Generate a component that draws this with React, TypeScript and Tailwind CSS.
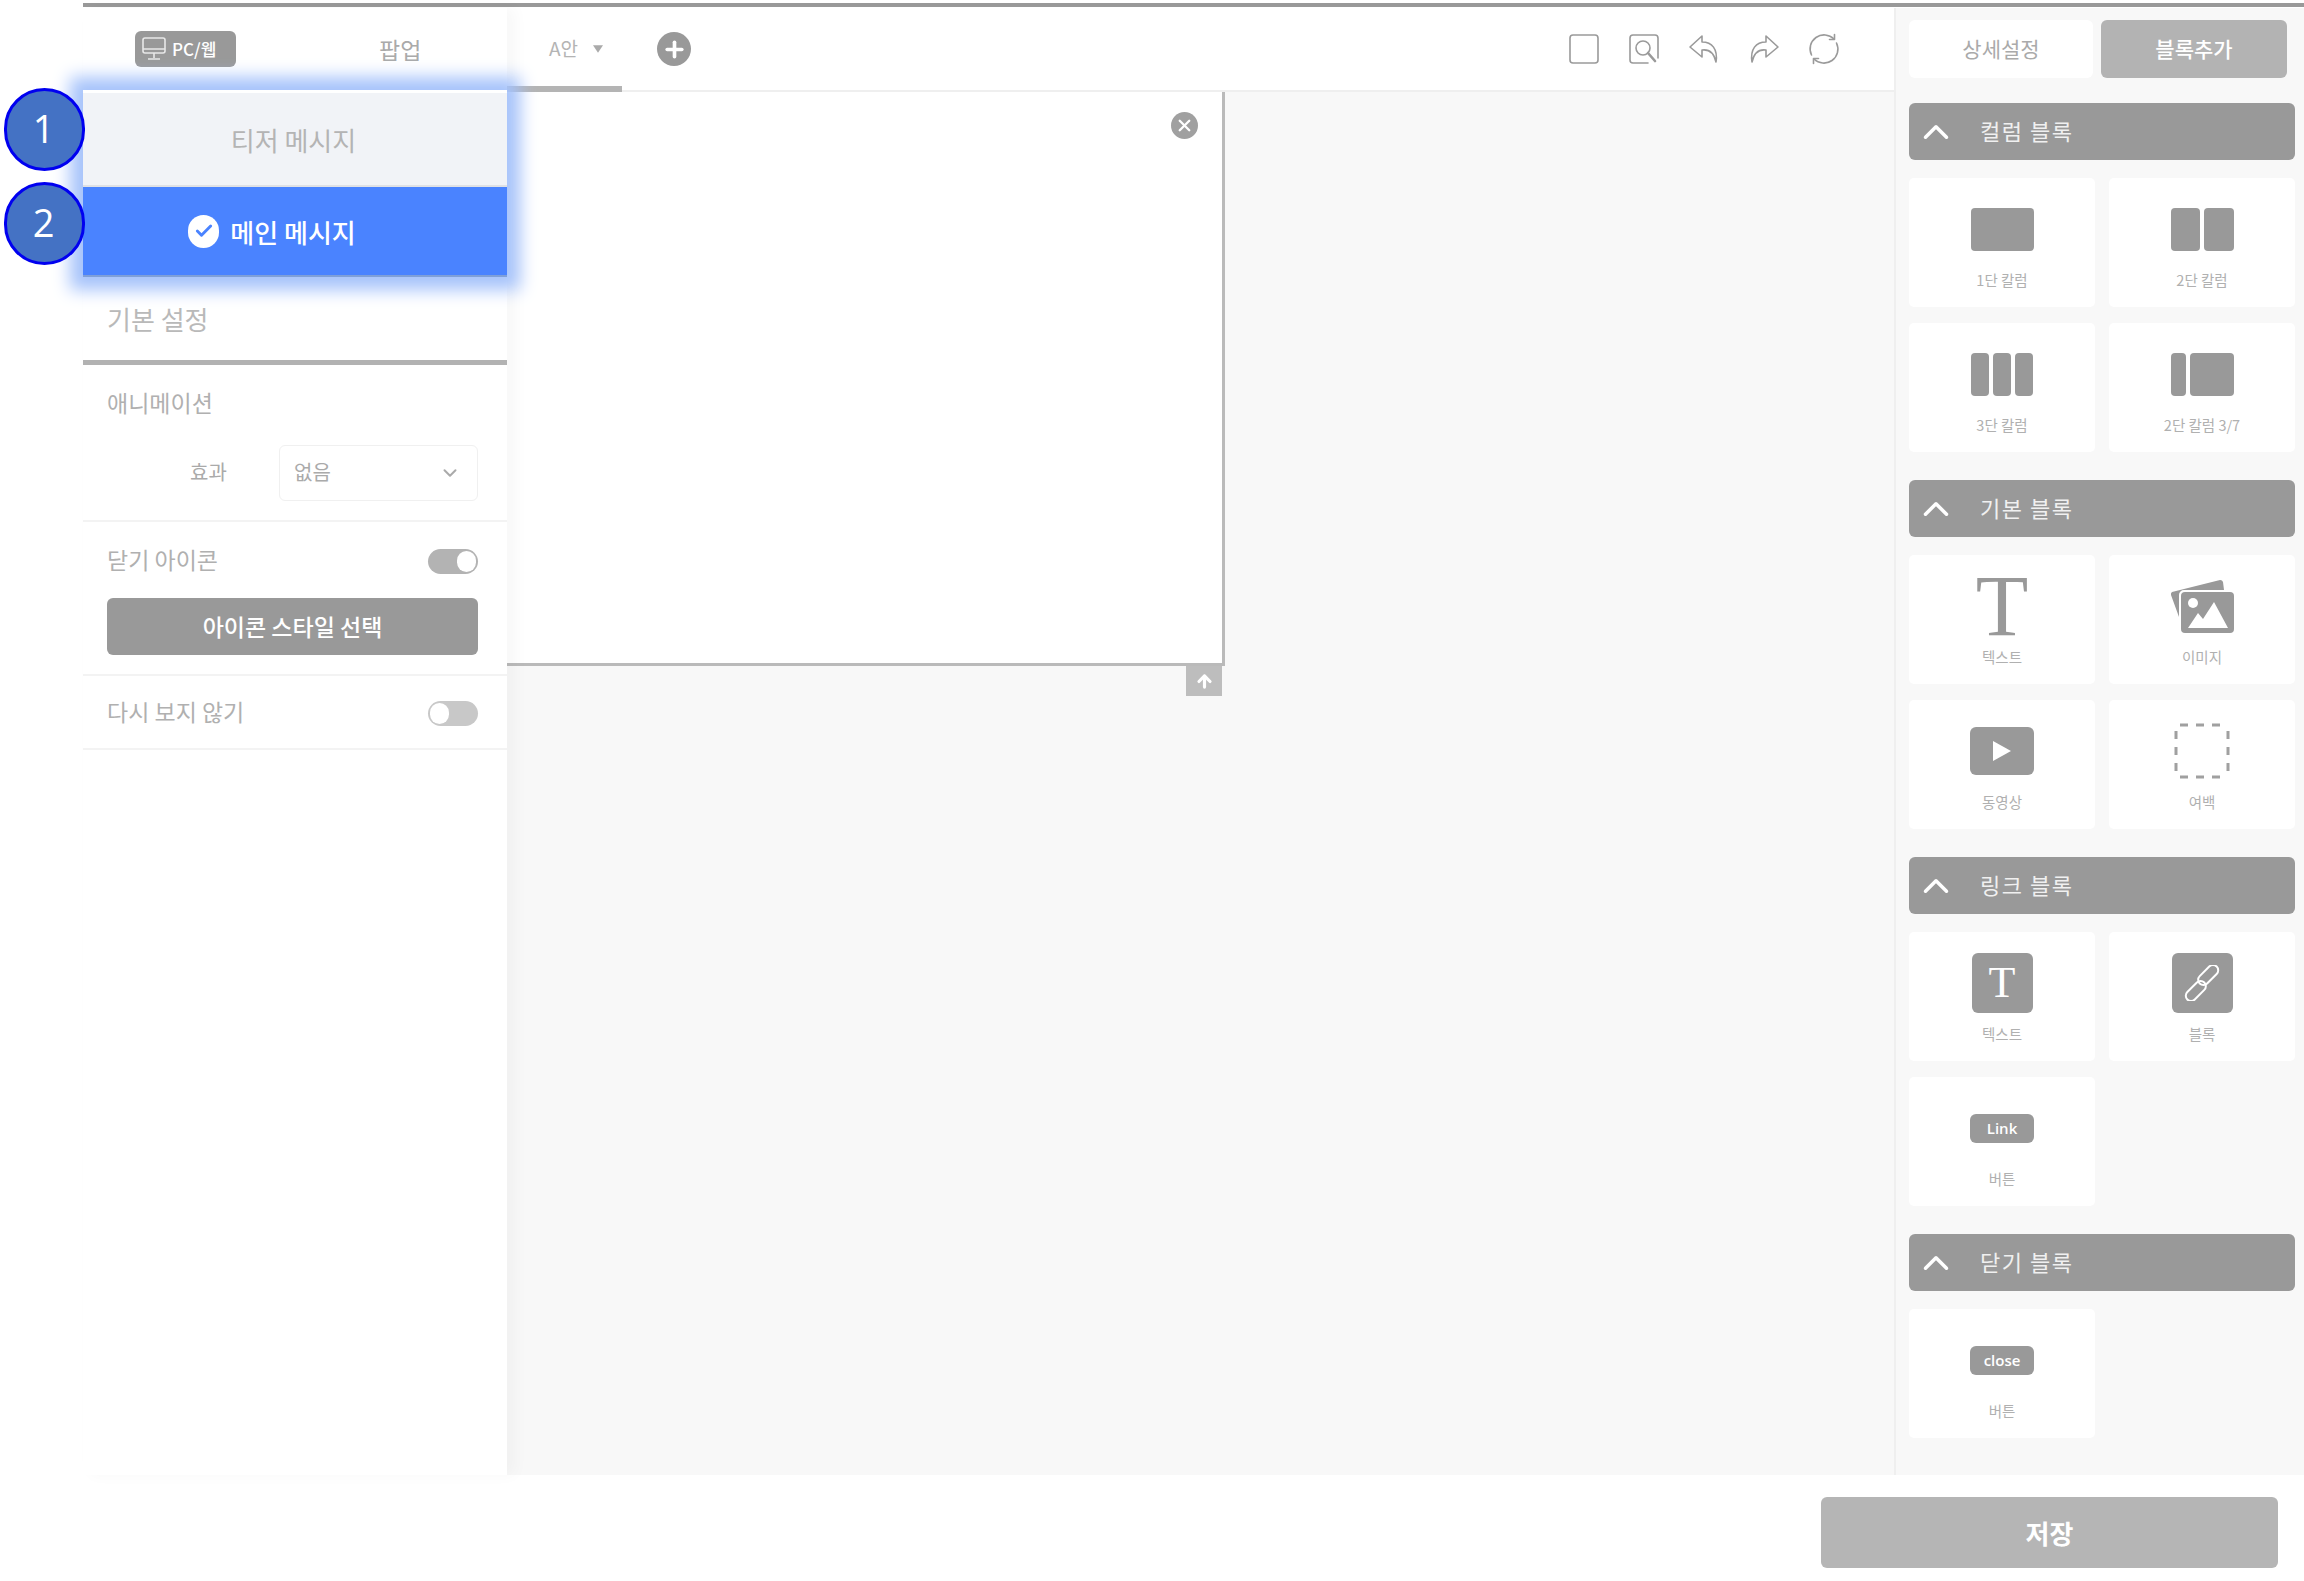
import React from "react";
import { ChevronDown, ChevronUp, Check, Plus, X, ArrowUp } from "lucide-react";

const FONT = "font-['Noto_Sans_CJK_KR','Noto_Sans',sans-serif]";

function Toggle({ on, cls = "" }: { on: boolean; cls?: string }) {
  return (
    <div className={`flex h-[25px] w-[50px] items-center rounded-full px-[2px] ${on ? "justify-end bg-[#b3b3b3]" : "justify-start bg-[#c8c8c8]"} ${cls}`}>
      <div className="h-[21px] w-[19px] rounded-full bg-white" />
    </div>
  );
}

function Divider() {
  return <div className="h-[2px] bg-[#f3f3f3]" />;
}

function Highlight() {
  return (
    <div className="relative z-10 shadow-[0_0_16px_13px_#a6c3fb]">
      <div className="flex h-[97px] items-center justify-center border-t-[3px] border-b-2 border-t-white border-b-[#dfe1e5] bg-[#f1f3f7] pr-[3px] text-[26px] text-[#b4b4b4]">
        티저 메시지
      </div>
      <div className="flex h-[90px] items-center justify-center gap-[11px] border-b-2 border-b-[#7f9fd8] bg-[#4a83ff] pr-[46px] text-[26px] font-medium text-white">
        <span className="flex h-[33px] w-[31px] items-center justify-center rounded-full bg-white">
          <Check size={20} strokeWidth={3.5} className="text-[#4a83ff]" />
        </span>
        메인 메시지
      </div>
      <Badge n="1" cls="top-[-2px]" />
      <Badge n="2" cls="top-[92px]" />
    </div>
  );
}

function Badge({ n, cls }: { n: string; cls: string }) {
  return (
    <div className={`absolute left-[-79px] flex h-[83px] w-[81px] items-center justify-center rounded-full border-[3px] border-[#0000f0] bg-[#4472c4] pb-[2px] pr-[2px] font-['Open_Sans',sans-serif] text-[38px] text-white ${cls}`}>
      {n}
    </div>
  );
}

function LeftPanel() {
  return (
    <aside className="relative z-20 flex w-[424px] shrink-0 flex-col bg-white shadow-[8px_0_14px_rgba(0,0,0,0.03)]">
      <div className="flex h-[82px] items-center">
        <div className="ml-[52px] flex h-[36px] w-[101px] items-center gap-[6px] rounded-[6px] bg-[#999] pl-[7px] text-[17px] font-medium text-white">
          <svg width="24" height="26" viewBox="0 0 24 26" fill="none" stroke="#e8e8e8" strokeWidth="1.6">
            <rect x="1" y="2" width="22" height="15" rx="2" />
            <path d="M1 13h22M12 17v5M6 23h12" />
          </svg>
          PC/웹
        </div>
        <div className="ml-[143px] text-[23px] text-[#aaa]">팝업</div>
      </div>
      <Highlight />
      <div className="flex h-[88px] items-center border-b-[5px] border-b-[#b2b2b2] pl-[24px] text-[26px] text-[#b9b9b9]">
        기본 설정
      </div>
      <div className="flex h-[155px] flex-col pl-[24px] pr-[29px]">
        <div className="mt-[22px] text-[23px] leading-[30px] text-[#b0b0b0]">애니메이션</div>
        <div className="mt-[28px] flex items-center">
          <div className="w-[172px] pb-[3px] pl-[83px] text-[20px] text-[#aaa]">효과</div>
          <div className="flex h-[56px] w-[199px] items-center justify-between rounded-[6px] border border-[#f0f0f0] pb-[1px] pl-[14px] pr-[16px] text-[20px] text-[#aaa]">
            <span className="mb-[2px]">없음</span>
            <ChevronDown size={22} strokeWidth={2.2} className="text-[#aaa]" />
          </div>
        </div>
      </div>
      <Divider />
      <div className="flex h-[152px] flex-col pl-[24px] pr-[29px]">
        <div className="mt-[27px] flex h-[25px] items-center justify-between text-[23px] text-[#b0b0b0]">
          <span className="mb-[5px]">닫기 아이콘</span>
          <Toggle on />
        </div>
        <div className="mt-[24px] flex h-[57px] items-center justify-center rounded-[6px] bg-[#999] text-[23px] font-medium text-white">
          아이콘 스타일 선택
        </div>
      </div>
      <Divider />
      <div className="flex h-[72px] items-center justify-between pl-[24px] pr-[29px] text-[23px] text-[#b0b0b0]">
        <span className="mb-[2px]">다시 보지 않기</span>
        <Toggle on={false} cls="mt-[2px]" />
      </div>
      <Divider />
    </aside>
  );
}

function ToolIcon({ children }: { children: React.ReactNode }) {
  return (
    <svg width="32" height="32" viewBox="0 0 32 32" fill="none" stroke="#9a9a9a" strokeWidth="1.6" strokeLinejoin="round" strokeLinecap="round">
      {children}
    </svg>
  );
}

function TopBar() {
  return (
    <div className="flex h-[84px] shrink-0 items-center border-b-2 border-b-[#efefef] bg-white">
      <div className="relative flex h-full w-[115px] items-center pb-[2px] pl-[42px] text-[19px] text-[#b4b4b4]">
        A안
        <svg width="10" height="8" viewBox="0 0 12 9" className="ml-[15px] mt-[2px]"><path d="M0 0h12L6 9z" fill="#aaa" /></svg>
        <div className="absolute bottom-[-2px] left-0 h-[6px] w-full bg-[#b4b4b4]" />
      </div>
      <div className="ml-[35px] flex h-[34px] w-[34px] items-center justify-center rounded-full bg-[#999]">
        <Plus size={25} strokeWidth={3.5} className="text-white" />
      </div>
      <div className="ml-auto mr-[54px] flex items-center gap-[28px]">
        <ToolIcon><rect x="2" y="2" width="28" height="28" rx="3" /></ToolIcon>
        <ToolIcon>
          <path d="M20 30H5a3 3 0 0 1-3-3V5a3 3 0 0 1 3-3h22a3 3 0 0 1 3 3v20" />
          <circle cx="15" cy="15" r="7" />
          <path d="M20 20l7 8" strokeWidth="2.6" />
        </ToolIcon>
        <ToolIcon>
          <path d="M14 3L2 14l12 10v-7c7-1 12 3 14 12 2-13-4-20-14-20z" />
        </ToolIcon>
        <ToolIcon>
          <path d="M18 3l12 11-12 10v-7C11 16 6 20 4 29 2 16 8 9 18 9z" />
        </ToolIcon>
        <ToolIcon>
          <path d="M3.500 22A14 14 0 0 1 26 6" />
          <path d="M28.500 10A14 14 0 0 1 6 26" />
          <path d="M26.500 1.500v5h-5M5.500 30.500v-5h5" />
        </ToolIcon>
      </div>
    </div>
  );
}

function Canvas() {
  return (
    <div className="flex min-h-0 flex-1 flex-col bg-[#f8f8f8]">
      <div className="relative h-[574px] w-[718px] border-r-[3px] border-b-[3px] border-r-[#bababa] border-b-[#bababa] bg-white">
        <div className="absolute right-[24px] top-[20px] flex h-[27px] w-[27px] items-center justify-center rounded-full bg-[#a0a0a0]">
          <X size={19} strokeWidth={3} className="text-white" />
        </div>
        <div className="absolute bottom-[-33px] right-0 flex h-[30px] w-[36px] items-center justify-center bg-[#bdbdbd]">
          <ArrowUp size={19} strokeWidth={4} className="text-white" />
        </div>
      </div>
    </div>
  );
}

function Col({ parts }: { parts: string[] }) {
  return (
    <div className="flex h-[43px] w-[63px] gap-[4px]">
      {parts.map((p, i) => (
        <div key={i} className={`h-full rounded-[4px] bg-[#999] ${p}`} />
      ))}
    </div>
  );
}

function Card({ label, children }: { label: string; children: React.ReactNode }) {
  return (
    <div className="flex h-[129px] flex-col items-center rounded-[5px] bg-white">
      <div className="mt-[10px] flex h-[82px] items-center justify-center">{children}</div>
      <div className="h-[20px] text-center text-[14.5px] leading-[20px] text-[#b0b0b0]">{label}</div>
    </div>
  );
}

function Section({ title, children, mt }: { title: string; children: React.ReactNode; mt: string }) {
  return (
    <section className={mt}>
      <div className="flex h-[57px] items-center rounded-[6px] bg-[#999] text-[22px] tracking-[1.5px] text-[#f0f0f0]">
        <ChevronUp size={42} strokeWidth={2} className="ml-[6px] text-white" />
        <span className="mb-[3px] ml-[23px]">{title}</span>
      </div>
      <div className="mt-[18px] grid grid-cols-2 gap-x-[14px] gap-y-[16px]">{children}</div>
    </section>
  );
}

function SmallBtn({ text }: { text: string }) {
  return (
    <div className="flex h-[29px] w-[64px] items-center justify-center rounded-[6px] bg-[#999] font-['Open_Sans',sans-serif] text-[15px] font-semibold text-white">
      {text}
    </div>
  );
}

function RightPanel() {
  return (
    <aside className="flex w-[410px] shrink-0 flex-col overflow-hidden border-l-2 border-l-[#efefef] bg-[#f8f8f8] pl-[13px] pr-[9px]">
      <div className="-mr-[8px] flex h-[84px] shrink-0 items-start gap-[8px] pt-[12px]">
        <div className="flex h-[58px] w-[184px] items-center justify-center rounded-[6px] bg-white text-[21px] text-[#aaa]">상세설정</div>
        <div className="flex h-[58px] w-[186px] items-center justify-center rounded-[6px] bg-[#b3b3b3] text-[21px] font-medium text-white">블록추가</div>
      </div>
      <Section title="컬럼 블록" mt="mt-[11px]">
        <Card label="1단 칼럼"><Col parts={["flex-1"]} /></Card>
        <Card label="2단 칼럼"><Col parts={["flex-1", "flex-1"]} /></Card>
        <Card label="3단 칼럼"><Col parts={["flex-1", "flex-1", "flex-1"]} /></Card>
        <Card label="2단 칼럼 3/7"><Col parts={["w-[15px]", "flex-1"]} /></Card>
      </Section>
      <Section title="기본 블록" mt="mt-[28px]">
        <Card label="텍스트">
          <span className="font-['Liberation_Serif',serif] text-[86px] leading-[60px] text-[#999]">T</span>
        </Card>
        <Card label="이미지">
          <svg width="64" height="56" viewBox="0 0 64 56">
            <path d="M2 14L50 2a3 3 0 0 1 3 2l1 8H14a5 5 0 0 0-5 5v22L1 17a3 3 0 0 1 1-3z" fill="#999" />
            <rect x="11" y="14" width="53" height="41" rx="4" fill="#999" />
            <circle cx="23" cy="25" r="5" fill="#fff" />
            <path d="M18 50l10-15 5 6 11-17 14 26z" fill="#fff" />
          </svg>
        </Card>
        <Card label="동영상">
          <div className="flex h-[48px] w-[64px] items-center justify-center rounded-[6px] bg-[#999]">
            <svg width="18" height="20" viewBox="0 0 18 20"><path d="M0 0l18 10L0 20z" fill="#fff" /></svg>
          </div>
        </Card>
        <Card label="여백">
          <svg width="56" height="56" viewBox="0 0 56 56" fill="none" stroke="#a0a0a0" strokeWidth="3">
            <path d="M6 2h8M22 2h8M38 2h8M54 8v8M54 24v8M54 40v8M6 54h8M22 54h8M38 54h8M2 8v8M2 24v8M2 40v8" />
          </svg>
        </Card>
      </Section>
      <Section title="링크 블록" mt="mt-[28px]">
        <Card label="텍스트">
          <div className="flex h-[60px] w-[61px] items-center justify-center rounded-[6px] bg-[#999] font-['Liberation_Serif',serif] text-[44px] leading-none text-white">T</div>
        </Card>
        <Card label="블록">
          <div className="flex h-[60px] w-[61px] items-center justify-center rounded-[6px] bg-[#999]">
            <svg width="36" height="36" viewBox="0 0 36 36" fill="none" stroke="#fff" strokeWidth="2">
              <g transform="rotate(-45 18 18)">
                <rect x="-4" y="14" width="24" height="10.500" rx="5.250" />
                <rect x="16" y="11.500" width="24" height="10.500" rx="5.250" />
              </g>
            </svg>
          </div>
        </Card>
        <Card label="버튼"><SmallBtn text="Link" /></Card>
      </Section>
      <Section title="닫기 블록" mt="mt-[28px]">
        <Card label="버튼"><SmallBtn text="close" /></Card>
      </Section>
    </aside>
  );
}

export default function App() {
  return (
    <div className={`flex h-[1581px] w-[2304px] flex-col overflow-hidden bg-white ${FONT}`}>
      <div className="ml-[83px] mb-[1px] mt-[3px] h-[4px] shrink-0 bg-[#999]" />
      <div className="ml-[83px] flex min-h-0 flex-1">
        <LeftPanel />
        <main className="flex min-w-0 flex-1 flex-col">
          <TopBar />
          <Canvas />
        </main>
        <RightPanel />
      </div>
      <footer className="flex h-[106px] shrink-0 items-start justify-end pr-[26px] pt-[22px]">
        <div className="flex h-[71px] w-[457px] items-center justify-center rounded-[6px] bg-[#b5b5b5] text-[26px] font-bold text-white">저장</div>
      </footer>
    </div>
  );
}
